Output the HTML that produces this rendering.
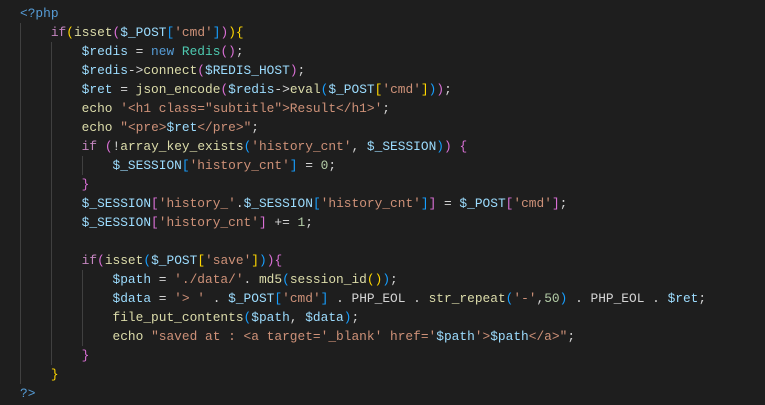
<!DOCTYPE html>
<html><head><meta charset="utf-8"><style>
html,body{margin:0;padding:0;background:#1e1e1e;width:765px;height:405px;overflow:hidden}
.c{position:absolute;left:20px;top:4px;font-family:"Liberation Mono",monospace;font-size:12.85px;line-height:19px;color:#d4d4d4;white-space:pre}
.g{position:absolute;width:1px;background:#404040}
.v{color:#9cdcfe}.k{color:#c586c0}.f{color:#dcdcaa}.s{color:#ce9178}.b{color:#569cd6}.t{color:#4ec9b0}.n{color:#b5cea8}
.y{color:#ffd700}.o{color:#da70d6}.l{color:#179fff}
</style></head><body>
<div class="g" style="left:20px;top:23px;height:361px"></div>
<div class="g" style="left:51px;top:42px;height:323px"></div>
<div class="g" style="left:82px;top:156px;height:19px"></div>
<div class="g" style="left:82px;top:270px;height:76px"></div>
<div class="c"><span class="b">&lt;?php</span>
    <span class="k">if</span><span class="y">(</span><span class="f">isset</span><span class="o">(</span><span class="v">$_POST</span><span class="l">[</span><span class="s">'cmd'</span><span class="l">]</span><span class="o">)</span><span class="y">){</span>
        <span class="v">$redis</span> = <span class="b">new</span> <span class="t">Redis</span><span class="o">()</span>;
        <span class="v">$redis</span>-&gt;<span class="f">connect</span><span class="o">(</span><span class="v">$REDIS_HOST</span><span class="o">)</span>;
        <span class="v">$ret</span> = <span class="f">json_encode</span><span class="o">(</span><span class="v">$redis</span>-&gt;<span class="f">eval</span><span class="l">(</span><span class="v">$_POST</span><span class="y">[</span><span class="s">'cmd'</span><span class="y">]</span><span class="l">)</span><span class="o">)</span>;
        <span class="f">echo</span> <span class="s">'&lt;h1 class="subtitle"&gt;Result&lt;/h1&gt;'</span>;
        <span class="f">echo</span> <span class="s">"&lt;pre&gt;</span><span class="v">$ret</span><span class="s">&lt;/pre&gt;"</span>;
        <span class="k">if</span> <span class="o">(</span>!<span class="f">array_key_exists</span><span class="l">(</span><span class="s">'history_cnt'</span>, <span class="v">$_SESSION</span><span class="l">)</span><span class="o">)</span> <span class="o">{</span>
            <span class="v">$_SESSION</span><span class="l">[</span><span class="s">'history_cnt'</span><span class="l">]</span> = <span class="n">0</span>;
        <span class="o">}</span>
        <span class="v">$_SESSION</span><span class="o">[</span><span class="s">'history_'</span>.<span class="v">$_SESSION</span><span class="l">[</span><span class="s">'history_cnt'</span><span class="l">]</span><span class="o">]</span> = <span class="v">$_POST</span><span class="o">[</span><span class="s">'cmd'</span><span class="o">]</span>;
        <span class="v">$_SESSION</span><span class="o">[</span><span class="s">'history_cnt'</span><span class="o">]</span> += <span class="n">1</span>;

        <span class="k">if</span><span class="o">(</span><span class="f">isset</span><span class="l">(</span><span class="v">$_POST</span><span class="y">[</span><span class="s">'save'</span><span class="y">]</span><span class="l">)</span><span class="o">){</span>
            <span class="v">$path</span> = <span class="s">'./data/'</span>. <span class="f">md5</span><span class="l">(</span><span class="f">session_id</span><span class="y">()</span><span class="l">)</span>;
            <span class="v">$data</span> = <span class="s">'&gt; '</span> . <span class="v">$_POST</span><span class="l">[</span><span class="s">'cmd'</span><span class="l">]</span> . PHP_EOL . <span class="f">str_repeat</span><span class="l">(</span><span class="s">'-'</span>,<span class="n">50</span><span class="l">)</span> . PHP_EOL . <span class="v">$ret</span>;
            <span class="f">file_put_contents</span><span class="l">(</span><span class="v">$path</span>, <span class="v">$data</span><span class="l">)</span>;
            <span class="f">echo</span> <span class="s">"saved at : &lt;a target='_blank' href='</span><span class="v">$path</span><span class="s">'&gt;</span><span class="v">$path</span><span class="s">&lt;/a&gt;"</span>;
        <span class="o">}</span>
    <span class="y">}</span>
<span class="b">?&gt;</span></div>
</body></html>
